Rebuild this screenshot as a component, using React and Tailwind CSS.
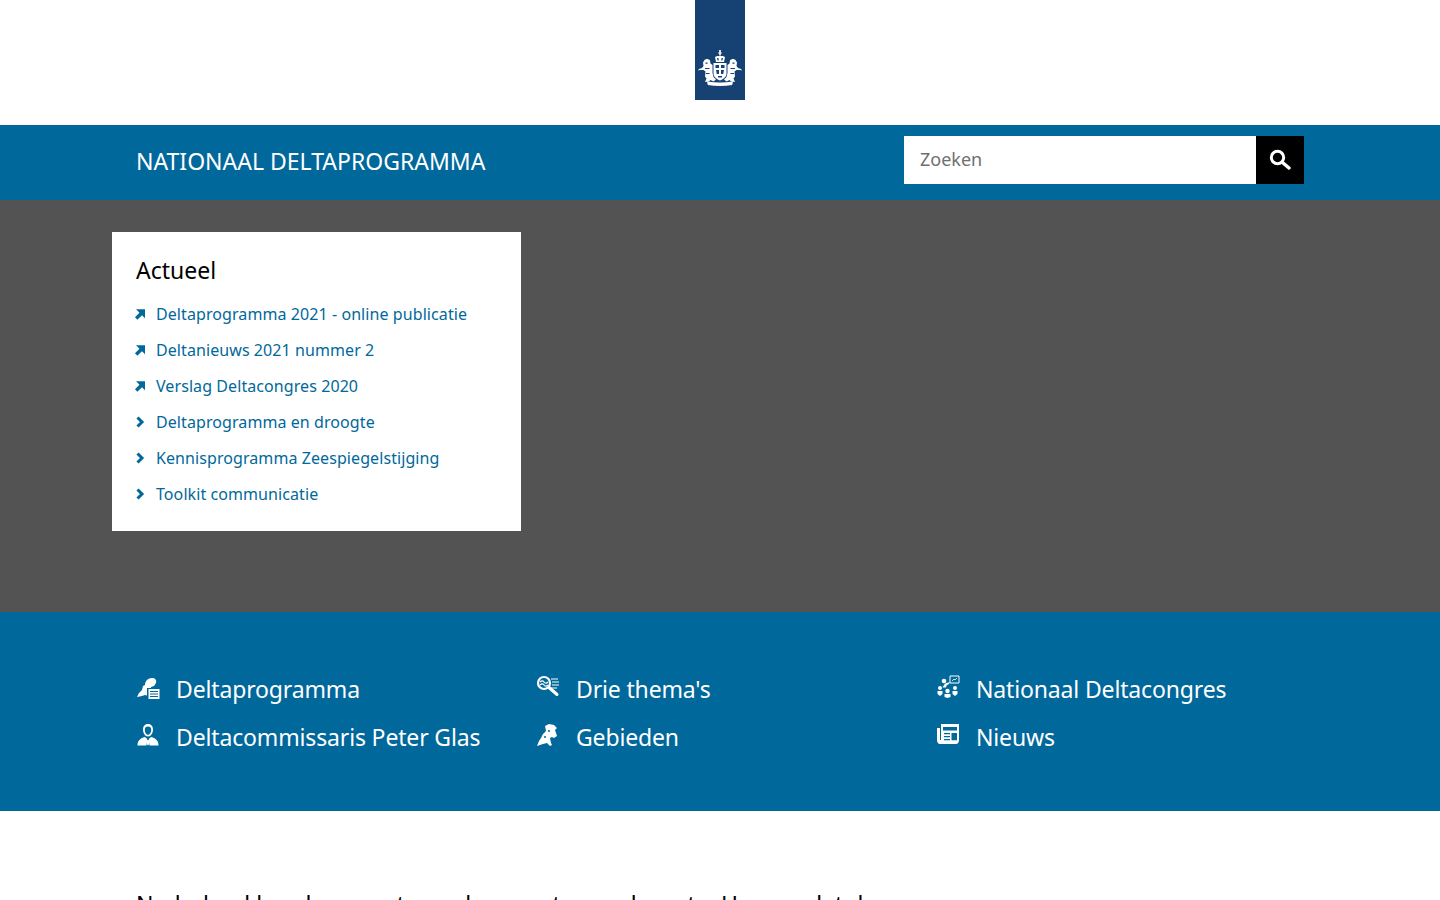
import React from 'react'

// Inline icons, traced from the reference
const Crest = () => (
  <svg viewBox="0 0 50 50" className="h-[50px] w-[50px]" fill="#fff">
    {/* crown */}
    <path d="M24.200 0h1.600v2.500h1v1h-1v2h-1.600v-2h-1v-1h1z" />
    <path fillRule="evenodd" d="M20 7c2-1.500 3.500-1 5-1s3-.5 5 1l-1 5h-8zm2 1l.6 2.500h1.200L23.400 8zm4.600 0l-.4 2.500h1.200L28 8z" />
    {/* shield */}
    <path fillRule="evenodd" d="M18.500 13h13v10.500c0 3.500-3 5.500-6.500 7-3.500-1.500-6.500-3.500-6.500-7zm2 2v3h3.500v-3zm5.500 0v3h3.500v-3zm-5 5l.8 4H24v-4zm5 0v4h2.200l.8-4zm-3 6v1.500h4V26z" />
    {/* lions */}
    <path d="M9.500 10c1.500-1.500 4-1.500 5.500.5l.5 3 2 1.500v8l1 4 2.500 2.500-2.500 2-3-1.500-1.500 1.500-4 .5 1.500-3.500-1.500-2 .5-5-2-1.500H5l-2 .5 1-1.500 3-1 1.500-2-.5-3.500z" />
    <path d="M40.500 10c-1.500-1.500-4-1.500-5.500.5l-.5 3-2 1.500v8l-1 4-2.500 2.500 2.500 2 3-1.500 1.500 1.500 4 .5-1.500-3.500 1.500-2-.5-5 2-1.500h3.500l2 .5-1-1.500-3-1-1.500-2 .5-3.500z" />
    <path fill="#154273" d="M10.500 12.500h2v1.200h-2zM37.500 12.500h2v1.200h-2zM10 18h4.500v1H10zM35.500 18H40v1h-4.500zM11 23h3.500v1H11zM35.500 23H39v1h-3.500z" />
    {/* ribbon */}
    <path d="M12 31.500c8.500 1.300 17.500 1.300 26 0l-.8 3.500c-8 1.200-16.400 1.200-24.400 0z" />
  </svg>
)

const SearchIcon = () => (
  <svg viewBox="0 0 22 22" className="h-[22px] w-[22px]" fill="none" stroke="#fff" strokeLinecap="round">
    <circle cx="8.500" cy="8.500" r="6.200" strokeWidth="3" />
    <path d="M13.500 13.500l6.500 5.500" strokeWidth="3.400" />
  </svg>
)

const ArrowUpRight = () => (
  <svg viewBox="0 0 12 12" className="h-3 w-3" fill="none" stroke="#01689b">
    <path d="M2.200 10.500L8 4.700" strokeWidth="3.400" />
    <path d="M2 1.300h9v9z" fill="#01689b" stroke="none" />
  </svg>
)

const Chevron = () => (
  <svg viewBox="0 0 12 12" className="h-3 w-3" fill="none" stroke="#01689b" strokeWidth="3">
    <path d="M3.500 1.500L8 6l-4.500 4.500" />
  </svg>
)

const IconProgram = () => (
  <svg viewBox="0 0 24 24" className="h-6 w-6" fill="#fff">
    <path d="M1 22l2-4 3-3 1-4 2-1c0-4 3-7 7-7 3 0 5 2 4 5l-2 3-3 1v6l-2 3-4-1-3 1z" />
    <path fill="#01689b" d="M11 13h13v11H11z" />
    <path d="M12.500 14h11v10h-11z" />
    <path stroke="#01689b" strokeWidth="1" d="M14 16.500h8M14 19h8M14 21.500h8" />
  </svg>
)

const IconPerson = () => (
  <svg viewBox="0 0 24 24" className="h-6 w-6" fill="#fff">
    <path fillRule="evenodd" d="M12 1c3.500 0 5 2.500 5 5.500 0 3.500-2 7-5 7s-5-3.500-5-7C7 3.500 8.500 1 12 1zm0 2.500c-2 0-3.200 1-3.200 3.200 0 2.500 1.400 5 3.200 5s3.200-2.500 3.200-5c0-2.200-1.200-3.200-3.200-3.200z" />
    <path d="M9 14l2.300 2-.8 6.500H1.500c0-4.500 2-7 7.500-8.500zM15 14l-2.300 2 .8 6.500h9c0-4.500-2-7-7.500-8.500z" />
    <path d="M11.200 17h1.600l.5 4-1.300 1.500-1.300-1.500z" />
  </svg>
)

const IconThemes = () => (
  <svg viewBox="0 0 24 24" className="h-6 w-6" fill="none" stroke="#fff">
    <circle cx="8" cy="8" r="6" strokeWidth="2.200" />
    <path d="M13 12.500l8 7" strokeWidth="3" strokeLinecap="round" />
    <path d="M4 7c1.500-1.500 3-1.500 4 0s2.500 1.500 4 0M4 10c1.500-1.500 3-1.500 4 0s2.500 1.500 4 0" strokeWidth="1.200" />
    <path d="M15 4h7M16 7h7M16 10h7M15 13h6" strokeWidth="1.200" />
  </svg>
)

const IconMap = () => (
  <svg viewBox="0 0 24 24" className="h-6 w-6" fill="#fff">
    <path d="M1 23l2-5 2-3 2-4 3-3-1-5 4-2 5 1 3 3-2 2 1 3 1 3-3 2-2-1-2 1 1 5 1 2-2 1-3-3-4 1z" />
    <circle cx="9" cy="14" r="1" fill="#01689b" />
    <circle cx="13" cy="8" r="1" fill="#01689b" />
  </svg>
)

const IconCongress = () => (
  <svg viewBox="0 0 24 24" className="h-6 w-6" fill="#fff">
    <path d="M14 1h9v7h-9z" fill="none" stroke="#fff" strokeWidth="1" />
    <path d="M16 6l2-2 1 1 2-2" fill="none" stroke="#fff" strokeWidth=".8" />
    <circle cx="8" cy="6" r="2.300" />
    <path d="M9 8.500l5-1.500-1 2-2.500 1.500-.5 2H6.500z" />
    <circle cx="4" cy="13" r="2" />
    <circle cx="19" cy="13" r="2" />
    <circle cx="11.500" cy="16" r="2.200" />
    <path d="M1.500 16h5v3l-2.500 2-2.500-2zM16.500 16h5v3l-2.500 2-2.500-2zM8.500 19h6v3l-3 1-3-1z" />
  </svg>
)

const IconNews = () => (
  <svg viewBox="0 0 24 24" className="h-6 w-6" fill="#fff">
    <path d="M5 1h18v16c0 2-1 4-3 4H4c-2 0-3-2-3-4V5h3v12h1z" />
    <path fill="#01689b" d="M7 4h14v3.500H7zM8 10h6v1.300H8zM8 13h6v1.300H8zM8 16h6v1.300H8zM15.500 10H21v7.300h-5.500z" />
  </svg>
)

const NEWS_LINKS = [
  { label: 'Deltaprogramma 2021 - online publicatie', external: true },
  { label: 'Deltanieuws 2021 nummer 2', external: true },
  { label: 'Verslag Deltacongres 2020', external: true },
  { label: 'Deltaprogramma en droogte' },
  { label: 'Kennisprogramma Zeespiegelstijging' },
  { label: 'Toolkit communicatie' },
]

const NAV_LINKS = [
  { label: 'Deltaprogramma', Icon: IconProgram },
  { label: "Drie thema's", Icon: IconThemes },
  { label: 'Nationaal Deltacongres', Icon: IconCongress },
  { label: 'Deltacommissaris Peter Glas', Icon: IconPerson },
  { label: 'Gebieden', Icon: IconMap },
  { label: 'Nieuws', Icon: IconNews },
]

export default function App() {
  return (
    <div className="h-[900px] overflow-hidden bg-white font-['Noto_Sans',sans-serif]">
      {/* Logo */}
      <div className="flex h-[125px] justify-center">
        <div className="flex h-[100px] w-[50px] items-end bg-[#154273]">
          <Crest />
        </div>
      </div>

      {/* Title bar */}
      <div className="h-[75px] bg-[#01689b]">
        <div className="mx-auto flex h-full w-[1216px] items-start justify-between px-6">
          <div className="pt-[19px] text-[23px] leading-[34px] text-white">NATIONAAL DELTAPROGRAMMA</div>
          <div className="mt-[11px] flex h-12 w-[400px]">
            <div className="flex flex-1 items-center bg-white pb-[1px] pl-4 text-[18px] text-[#6f6f6f]">Zoeken</div>
            <div className="flex w-12 items-center justify-center bg-black">
              <SearchIcon />
            </div>
          </div>
        </div>
      </div>

      {/* Hero */}
      <div className="h-[412px] bg-[#535353] pt-8">
        <div className="mx-auto w-[1216px]">
          <div className="h-[299px] w-[409px] bg-white px-6 pt-[20px]">
            <h2 className="text-[23px] leading-[36px] text-black">Actueel</h2>
            <ul className="mt-[8px]">
              {NEWS_LINKS.map((link) => (
                <li key={link.label} className="flex h-9 items-center text-[16px] tracking-[0.08px] text-[#01689b]">
                  <span className="w-5 shrink-0 -translate-x-[2px]">
                    {link.external ? <ArrowUpRight /> : <Chevron />}
                  </span>
                  {link.label}
                </li>
              ))}
            </ul>
          </div>
        </div>
      </div>

      {/* Navigation */}
      <div className="h-[199px] bg-[#01689b] pt-[53px]">
        <div className="mx-auto grid w-[1216px] grid-cols-[400px_400px_400px] px-6">
          {NAV_LINKS.map(({ label, Icon }) => (
            <div key={label} className="flex h-12 items-center text-[23px] tracking-[-0.15px] text-white">
              <span className="mr-[16px] -translate-y-[2px]"><Icon /></span>
              {label}
            </div>
          ))}
        </div>
      </div>

      {/* Intro */}
      <div className="mx-auto w-[1216px] px-6 pt-[76px]">
        <p className="text-[23px] leading-[34px] text-black">Nederland beschermen tegen hoogwater en droogte. Hoe we dat doen</p>
      </div>
    </div>
  )
}
